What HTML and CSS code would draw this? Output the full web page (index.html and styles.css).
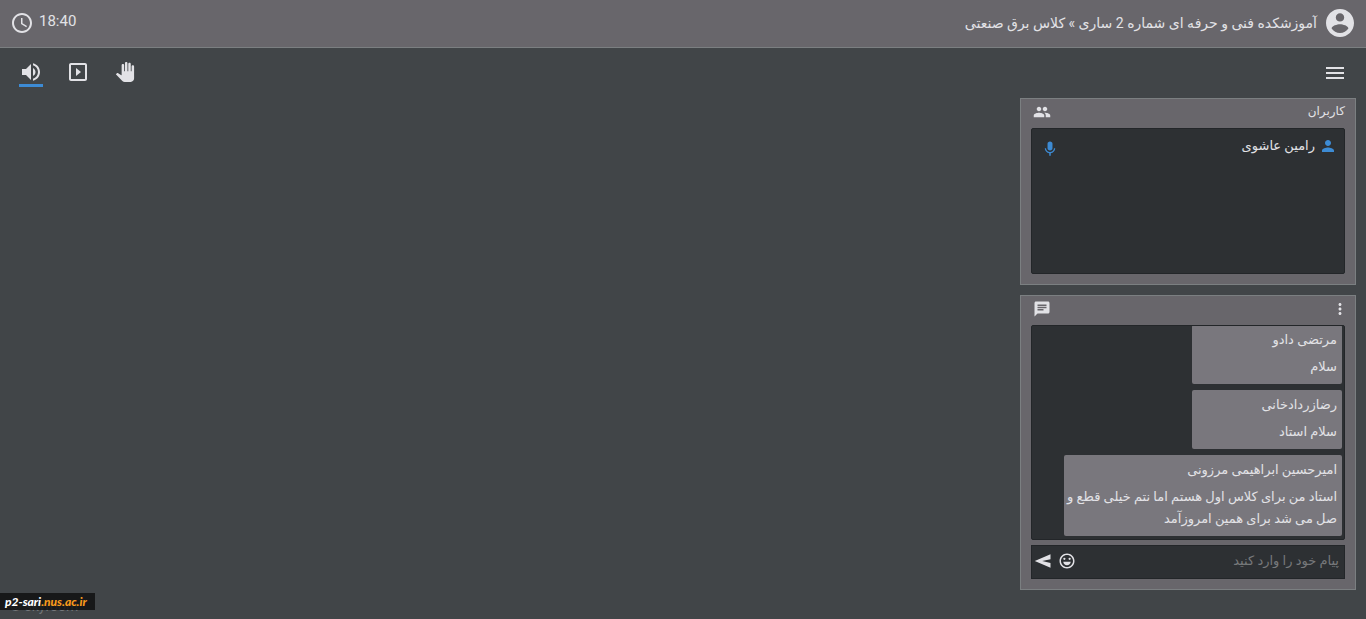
FILE: index.html
```html
<!DOCTYPE html>
<html lang="fa" dir="rtl">
<head>
  <meta charset="UTF-8" />
  <meta name="viewport" content="width=device-width, initial-scale=1" />
  <title>کلاس برق صنعتی</title>
  <link rel="stylesheet" href="styles.css">
</head>
<body>
  <header class="header">
    <div class="room">
      <svg class="avatar" viewBox="2 2 20 20"><path d="M12 2C6.48 2 2 6.48 2 12s4.48 10 10 10 10-4.48 10-10S17.52 2 12 2zm0 3c1.66 0 3 1.34 3 3s-1.34 3-3 3-3-1.34-3-3 1.34-3 3-3zm0 14.2c-2.5 0-4.71-1.28-6-3.22.03-1.99 4-3.08 6-3.08 1.99 0 5.97 1.09 6 3.08-1.29 1.94-3.5 3.22-6 3.22z"/></svg>
      <h1>آموزشکده فنی و حرفه ای شماره 2 ساری » کلاس برق صنعتی</h1>
    </div>
    <div class="clock">
      <span>18:40</span>
      <svg class="icon" viewBox="0 0 24 24"><path d="M11.99 2C6.47 2 2 6.48 2 12s4.47 10 9.99 10C17.52 22 22 17.52 22 12S17.52 2 11.99 2zM12 20c-4.42 0-8-3.58-8-8s3.58-8 8-8 8 3.58 8 8-3.58 8-8 8zm.5-13H11v6l5.25 3.15.75-1.23-4.5-2.67z"/></svg>
    </div>
  </header>

  <nav class="toolbar">
    <button class="tool" aria-label="منو">
      <svg class="icon" viewBox="0 0 24 24"><path d="M3 19h18v-2H3v2zm0-5h18v-2H3v2zm0-7v2h18V7H3z"/></svg>
    </button>
    <div class="tools">
      <button class="tool" aria-label="اجازه صحبت">
        <svg class="icon" viewBox="0 0 24 24"><path d="M23 5.5V20c0 2.2-1.8 4-4 4h-7.3c-1.08 0-2.1-.43-2.85-1.19L1 14.83s1.26-1.23 1.3-1.25c.22-.19.49-.29.79-.29.22 0 .42.06.6.16.04.01 4.31 2.46 4.31 2.46V4c0-.83.67-1.5 1.5-1.5S11 3.17 11 4v7h1V1.5c0-.83.67-1.5 1.5-1.5S15 .67 15 1.5V11h1V2.5c0-.83.67-1.5 1.5-1.5s1.5.67 1.5 1.5V11h1V5.5c0-.83.67-1.5 1.5-1.5s1.5.67 1.5 1.5z" transform="translate(2 2) scale(.83)"/></svg>
      </button>
      <button class="tool" aria-label="پخش">
        <svg class="icon" viewBox="0 0 24 24"><path d="M10 8v8l5-4-5-4zm9-5H5c-1.1 0-2 .9-2 2v14c0 1.1.9 2 2 2h14c1.1 0 2-.9 2-2V5c0-1.1-.9-2-2-2zm0 16H5V5h14v14z"/></svg>
      </button>
      <button class="tool active" aria-label="صدا">
        <svg class="icon" viewBox="0 0 24 24"><path d="M3 9v6h4l5 5V4L7 9H3zm13.5 3c0-1.77-1.02-3.29-2.5-4.03v8.05c1.48-.73 2.5-2.25 2.5-4.02zM14 3.23v2.06c2.89.86 5 3.54 5 6.71s-2.11 5.85-5 6.71v2.06c4.01-.91 7-4.49 7-8.77s-2.99-7.86-7-8.77z"/></svg>
      </button>
    </div>
  </nav>

  <main class="sidebar">
    <section class="panel">
      <div class="panel-head">
        <h2>کاربران</h2>
        <svg class="icon-small" viewBox="0 0 24 24"><path d="M16 11c1.66 0 2.99-1.34 2.99-3S17.66 5 16 5s-3 1.34-3 3 1.34 3 3 3zm-8 0c1.66 0 2.99-1.34 2.99-3S9.66 5 8 5 5 6.34 5 8s1.34 3 3 3zm0 2c-2.33 0-7 1.17-7 3.5V19h14v-2.5c0-2.33-4.67-3.5-7-3.5zm8 0c-.29 0-.62.02-.97.05 1.16.84 1.97 1.97 1.97 3.45V19h6v-2.5c0-2.33-4.67-3.5-7-3.5z"/></svg>
      </div>
      <ul class="users">
        <li class="user">
          <svg class="icon-small" viewBox="0 0 24 24"><path d="M12 12c2.21 0 4-1.79 4-4s-1.79-4-4-4-4 1.79-4 4 1.79 4 4 4zm0 2c-2.67 0-8 1.34-8 4v2h16v-2c0-2.66-5.33-4-8-4z"/></svg>
          <span>رامین عاشوی</span>
          <svg class="icon-small mic" viewBox="0 0 24 24"><path d="M12 14c1.9 0 3.300-1.340 3.300-3V5c0-1.660-1.400-3-3.300-3S8.700 3.340 8.700 5v6c0 1.660 1.400 3 3.300 3zm5.300-3c0 3-2.540 5.100-5.300 5.100S6.700 14 6.700 11H5c0 3.410 2.720 6.230 6 6.720V21h2v-3.280c3.280-.48 6-3.300 6-6.720h-1.700z"/></svg>
        </li>
      </ul>
    </section>

    <section class="panel">
      <div class="panel-head">
        <button class="more" aria-label="گزینه ها">
          <svg class="icon-small" viewBox="0 0 24 24"><path d="M12 8c1.1 0 2-.9 2-2s-.9-2-2-2-2 .9-2 2 .9 2 2 2zm0 2c-1.1 0-2 .9-2 2s.9 2 2 2 2-.9 2-2-.9-2-2-2zm0 6c-1.1 0-2 .9-2 2s.9 2 2 2 2-.9 2-2-.9-2-2-2z"/></svg>
        </button>
        <svg class="icon-small" viewBox="0 0 24 24"><path d="M20 2H4c-1.1 0-1.99.9-1.99 2L2 22l4-4h14c1.1 0 2-.9 2-2V4c0-1.1-.9-2-2-2zM6 9h12v2H6V9zm8 5H6v-2h8v2zm4-6H6V6h12v2z"/></svg>
      </div>
      <div class="messages">
        <div class="message">
          <h3>مرتضی دادو</h3>
          <p>سلام</p>
        </div>
        <div class="message">
          <h3>رضازردادخانی</h3>
          <p>سلام استاد</p>
        </div>
        <div class="message">
          <h3>امیرحسین ابراهیمی مرزونی</h3>
          <p>استاد من برای کلاس اول هستم اما نتم خیلی قطع و صل می شد برای همین امروزآمد</p>
        </div>
      </div>
      <form class="composer">
        <input type="text" placeholder="پیام خود را وارد کنید" aria-label="پیام">
        <button type="button" aria-label="شکلک">
          <svg class="icon-small" viewBox="0 0 24 24"><path d="M12 2C6.48 2 2 6.48 2 12s4.48 10 10 10 10-4.48 10-10S17.52 2 12 2zm0 18c-4.42 0-8-3.58-8-8s3.58-8 8-8 8 3.58 8 8-3.58 8-8 8zM8.5 10.500a1.500 1.500 0 1 0 0-3 1.500 1.500 0 0 0 0 3zm7 0a1.500 1.500 0 1 0 0-3 1.500 1.500 0 0 0 0 3zM7 13c.3 2.800 2.300 4.500 5 4.500s4.700-1.700 5-4.500z"/></svg>
        </button>
        <button type="button" aria-label="ارسال">
          <svg class="icon-small" viewBox="0 0 24 24"><path d="M22 3L1 12l21 9v-6.500L11 12l11-2.500z"/></svg>
        </button>
      </form>
    </section>
  </main>

  <footer class="footer" dir="ltr">© skyroom</footer>
  <div class="watermark" dir="ltr">p2-sari<span>.nus.ac.ir</span></div>
</body>
</html>
```
FILE: styles.css
```css
* {
  box-sizing: border-box;
}

body {
  margin: 0;
  min-height: 100vh;
  display: flex;
  flex-direction: column;
  background: #414548;
  color: #e2e2e6;
  font-family: Roboto, "DejaVu Sans", sans-serif;
  font-size: 13px;
  line-height: 22px;
}

h1, h2, h3, p, ul {
  margin: 0;
  padding: 0;
  font-size: 13px;
  font-weight: normal;
}

button {
  display: flex;
  padding: 0;
  border: 0;
  background: none;
  color: inherit;
  cursor: pointer;
}

svg {
  flex: none;
  fill: currentColor;
}

.icon {
  width: 24px;
  height: 24px;
}

.icon-small {
  width: 18px;
  height: 18px;
}

/* Header */
.header {
  display: flex;
  justify-content: space-between;
  align-items: center;
  height: 48px;
  padding: 0 12px 2px 10px;
  background: #68666b;
  border-bottom: 1px solid #7b7f81;
}

.room {
  display: flex;
  align-items: center;
  gap: 9px;
}

.room h1 {
  font-size: 14px;
}

.avatar {
  width: 28px;
  height: 28px;
}

.clock {
  display: flex;
  align-items: center;
  gap: 5px;
  font-size: 15px;
}

.clock span {
  padding-bottom: 3px;
}

/* Toolbar */
.toolbar {
  display: flex;
  justify-content: space-between;
  align-items: center;
  height: 50px;
  padding: 0 19px 2px;
}

.tools {
  display: flex;
  gap: 23px;
}

.tool {
  padding-top: 3px;
  border-bottom: 3px solid transparent;
}

.tool.active {
  border-color: #3d8bd4;
}

/* Side panels */
.sidebar {
  display: flex;
  flex-direction: column;
  gap: 10px;
  width: 336px;
  margin-right: 10px;
}

.panel {
  padding: 0 10px 10px;
  background: #68666b;
  border: 1px solid #7b7f81;
}

.panel-head {
  display: flex;
  justify-content: space-between;
  align-items: center;
  height: 29px;
  padding-left: 2px;
  padding-bottom: 4px;
}

.panel-head h2 {
  padding-bottom: 2px;
  font-size: 12px;
}

.more {
  margin-right: -4px;
}

.users {
  min-height: 146px;
  padding: 5px 7px 5px 9px;
  list-style: none;
  background: #2d3033;
  border: 1px solid #232629;
  border-radius: 2px;
}

.user {
  display: flex;
  align-items: center;
  gap: 4px;
}

.user svg {
  color: #3d8bd4;
}

.user .mic {
  margin-right: auto;
  margin-top: 6px;
}

.messages {
  display: flex;
  flex-direction: column;
  justify-content: flex-end;
  align-items: flex-start;
  gap: 6px;
  height: 215px;
  padding: 0 2px 3px;
  overflow: hidden;
  background: #2d3033;
  border: 1px solid #232629;
  border-radius: 2px;
}

.message {
  flex: none;
  min-width: 150px;
  max-width: 278px;
  padding: 4px 5px 6px 2px;
  background: #79777d;
  border-radius: 2px;
}

.message h3 {
  margin-bottom: 5px;
}

.composer {
  display: flex;
  align-items: center;
  gap: 6px;
  height: 34px;
  margin-top: 5px;
  padding: 0 5px 2px 2px;
  background: #2d3033;
  border: 1px solid #232629;
}

.composer input {
  flex: 1;
  min-width: 0;
  padding: 0;
  border: 0;
  outline: 0;
  background: none;
  color: inherit;
  font: inherit;
}

.composer input::placeholder {
  color: #77797b;
  opacity: 1;
}

/* Footer */
.footer {
  margin-top: auto;
  padding: 0 10px 2px;
  color: #74777a;
  font-size: 14px;
}

.watermark {
  position: absolute;
  left: 0;
  bottom: 9px;
  padding: 0 8px 0 5px;
  background: rgba(16, 17, 18, 0.85);
  color: #fff;
  font-family: Lato, sans-serif;
  font-size: 12px;
  font-style: italic;
  font-weight: 900;
  line-height: 17px;
}

.watermark span {
  color: #f79a1c;
}
```
